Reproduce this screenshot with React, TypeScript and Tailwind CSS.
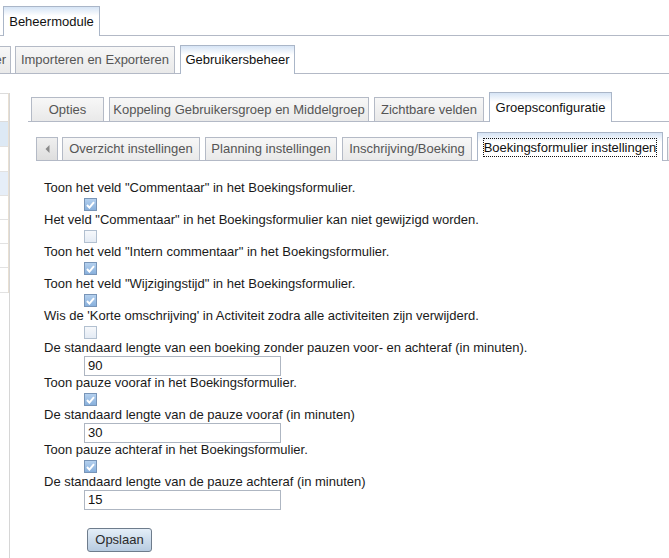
import React from "react";

const tabBase =
  "flex shrink-0 items-center justify-center border border-b-0 whitespace-nowrap";
const inactiveTab = `${tabBase} border-[#b4bac6] bg-[linear-gradient(#f7f7f7,#e9e9e9)] text-[#555]`;
const activeTab = `${tabBase} border-[#aab6c8] bg-[linear-gradient(#d6e4f5,#ffffff_9px)] text-[#111] mb-[-1px]`;

function Checkbox({ checked }: { checked: boolean }) {
  return (
    <div className="ml-[40px] mt-[2px] mb-[1px] h-[13px]">
      <span
        className={
          checked
            ? "flex h-[13px] w-[13px] items-center justify-center border border-[#7895b8] bg-[linear-gradient(#b4d0ee,#88b0dc)]"
            : "block h-[13px] w-[13px] border border-[#b2c0d0] bg-[linear-gradient(#f6f8fb,#e4ebf4)]"
        }
      >
        {checked && (
          <svg width="9" height="8" viewBox="0 0 9 8">
            <path
              d="M1 4 L3.4 6.6 L8 1.2"
              fill="none"
              stroke="#ffffff"
              strokeWidth="2"
            />
          </svg>
        )}
      </span>
    </div>
  );
}

function NumberField({ value }: { value: string }) {
  return (
    <div className="ml-[40px] h-[19px]">
      <div className="flex h-[20px] w-[197px] items-center border border-[#aeb6c2] bg-white px-[3px] text-[13px] text-[#111]">
        {value}
      </div>
    </div>
  );
}

function Label({ children }: { children: React.ReactNode }) {
  return <div className="h-[16px] leading-[16px] text-[#1a1a1a]">{children}</div>;
}

export default function App() {
  return (
    <div className="relative h-[558px] w-[669px] overflow-hidden bg-white font-['Liberation_Sans',Arial,sans-serif] text-[13px]">
      {/* module tabs */}
      <div className="flex h-[36px] items-end border-b border-[#b3b9c6] pl-[3px]">
        <div className={`${activeTab} h-[30px] w-[97px]`}>Beheermodule</div>
      </div>

      {/* section tabs */}
      <div className="flex h-[38px] items-end gap-[4px] border-b border-[#b3b9c6]">
        <div className={`${inactiveTab} ml-[-49px] h-[27px] w-[60px] !justify-end px-[4px]`}>
          Kalender
        </div>
        <div className={`${inactiveTab} h-[27px] w-[160px]`}>Importeren en Exporteren</div>
        <div className={`${activeTab} ml-[1px] h-[29px] w-[115px]`}>Gebruikersbeheer</div>
      </div>

      <div className="flex">
        {/* left list, cut off */}
        <div className="mt-[19px] h-[466px] w-[10px] shrink-0 border-r border-[#d6d6d6]">
          <div className="flex flex-col border-r border-[#e8dfd2]">
            <div className="h-[29px] border-t border-b border-[#dcdcdc]" />
            <div className="h-[25px] border-b border-[#e2e2e2] bg-[#dde9f5]" />
            <div className="h-[25px] border-b border-[#e2e2e2]" />
            <div className="h-[24px] border-b border-[#e2e2e2] bg-[#e6eef8]" />
            <div className="h-[24px] border-b border-[#e2e2e2]" />
            <div className="h-[24px] border-b border-[#e2e2e2]" />
            <div className="h-[24px] border-b border-[#e2e2e2]" />
            <div className="h-[25px] border-b border-[#e2e2e2]" />
          </div>
        </div>

        <div className="ml-[18px] min-w-0 flex-1">
          {/* group tabs */}
          <div className="flex h-[48px] items-end gap-[5px] border-b border-[#b3b9c6] pl-[3px]">
            <div className={`${inactiveTab} h-[24px] w-[73px]`}>Opties</div>
            <div className={`${inactiveTab} h-[24px] w-[260px]`}>
              Koppeling Gebruikersgroep en Middelgroep
            </div>
            <div className={`${inactiveTab} h-[24px] w-[110px]`}>Zichtbare velden</div>
            <div className={`${activeTab} h-[30px] w-[123px]`}>Groepsconfiguratie</div>
          </div>

          {/* settings tabs */}
          <div className="ml-[8px] flex h-[39px] items-end gap-[5px] border-b border-[#b3b9c6]">
            <div className="mr-[-1px] flex h-[23px] w-[22px] shrink-0 items-center justify-center border border-b-0 border-[#b4bac6] bg-[linear-gradient(#efefef,#dedede)]">
              <svg width="5" height="8" viewBox="0 0 5 8">
                <path d="M4.5 0 L0.5 4 L4.5 8 Z" fill="#8a8a8a" />
              </svg>
            </div>
            <div className={`${inactiveTab} h-[23px] w-[138px]`}>Overzicht instellingen</div>
            <div className={`${inactiveTab} h-[23px] w-[132px]`}>Planning instellingen</div>
            <div className={`${inactiveTab} h-[23px] w-[130px]`}>Inschrijving/Boeking</div>
            <div className={`${activeTab} h-[29px] w-[186px]`}>
              <span className="border border-dotted border-[#111] leading-[17px]">
                Boekingsformulier instellingen
              </span>
            </div>
            <div className={`${inactiveTab} ml-[-1px] h-[23px] w-[90px]`}>Overig</div>
          </div>

          {/* form */}
          <div className="pl-[16px] pt-[19px]">
            <Label>Toon het veld "Commentaar" in het Boekingsformulier.</Label>
            <Checkbox checked />
            <Label>
              Het veld "Commentaar" in het Boekingsformulier kan niet gewijzigd
              worden.
            </Label>
            <Checkbox checked={false} />
            <Label>
              Toon het veld "Intern commentaar" in het Boekingsformulier.
            </Label>
            <Checkbox checked />
            <Label>Toon het veld "Wijzigingstijd" in het Boekingsformulier.</Label>
            <Checkbox checked />
            <Label>
              Wis de 'Korte omschrijving' in Activiteit zodra alle activiteiten
              zijn verwijderd.
            </Label>
            <Checkbox checked={false} />
            <Label>
              De standaard lengte van een boeking zonder pauzen voor- en
              achteraf (in minuten).
            </Label>
            <NumberField value="90" />
            <Label>Toon pauze vooraf in het Boekingsformulier.</Label>
            <Checkbox checked />
            <Label>De standaard lengte van de pauze vooraf (in minuten)</Label>
            <NumberField value="30" />
            <Label>Toon pauze achteraf in het Boekingsformulier.</Label>
            <Checkbox checked />
            <Label>De standaard lengte van de pauze achteraf (in minuten)</Label>
            <NumberField value="15" />

            <button className="ml-[43px] mt-[19px] h-[24px] w-[65px] rounded-[3px] border border-[#6e7c8c] bg-[linear-gradient(#e4eef8,#b7cbe0)] text-[13px] text-[#2a2a2a]">
              Opslaan
            </button>
          </div>
        </div>
      </div>
    </div>
  );
}
